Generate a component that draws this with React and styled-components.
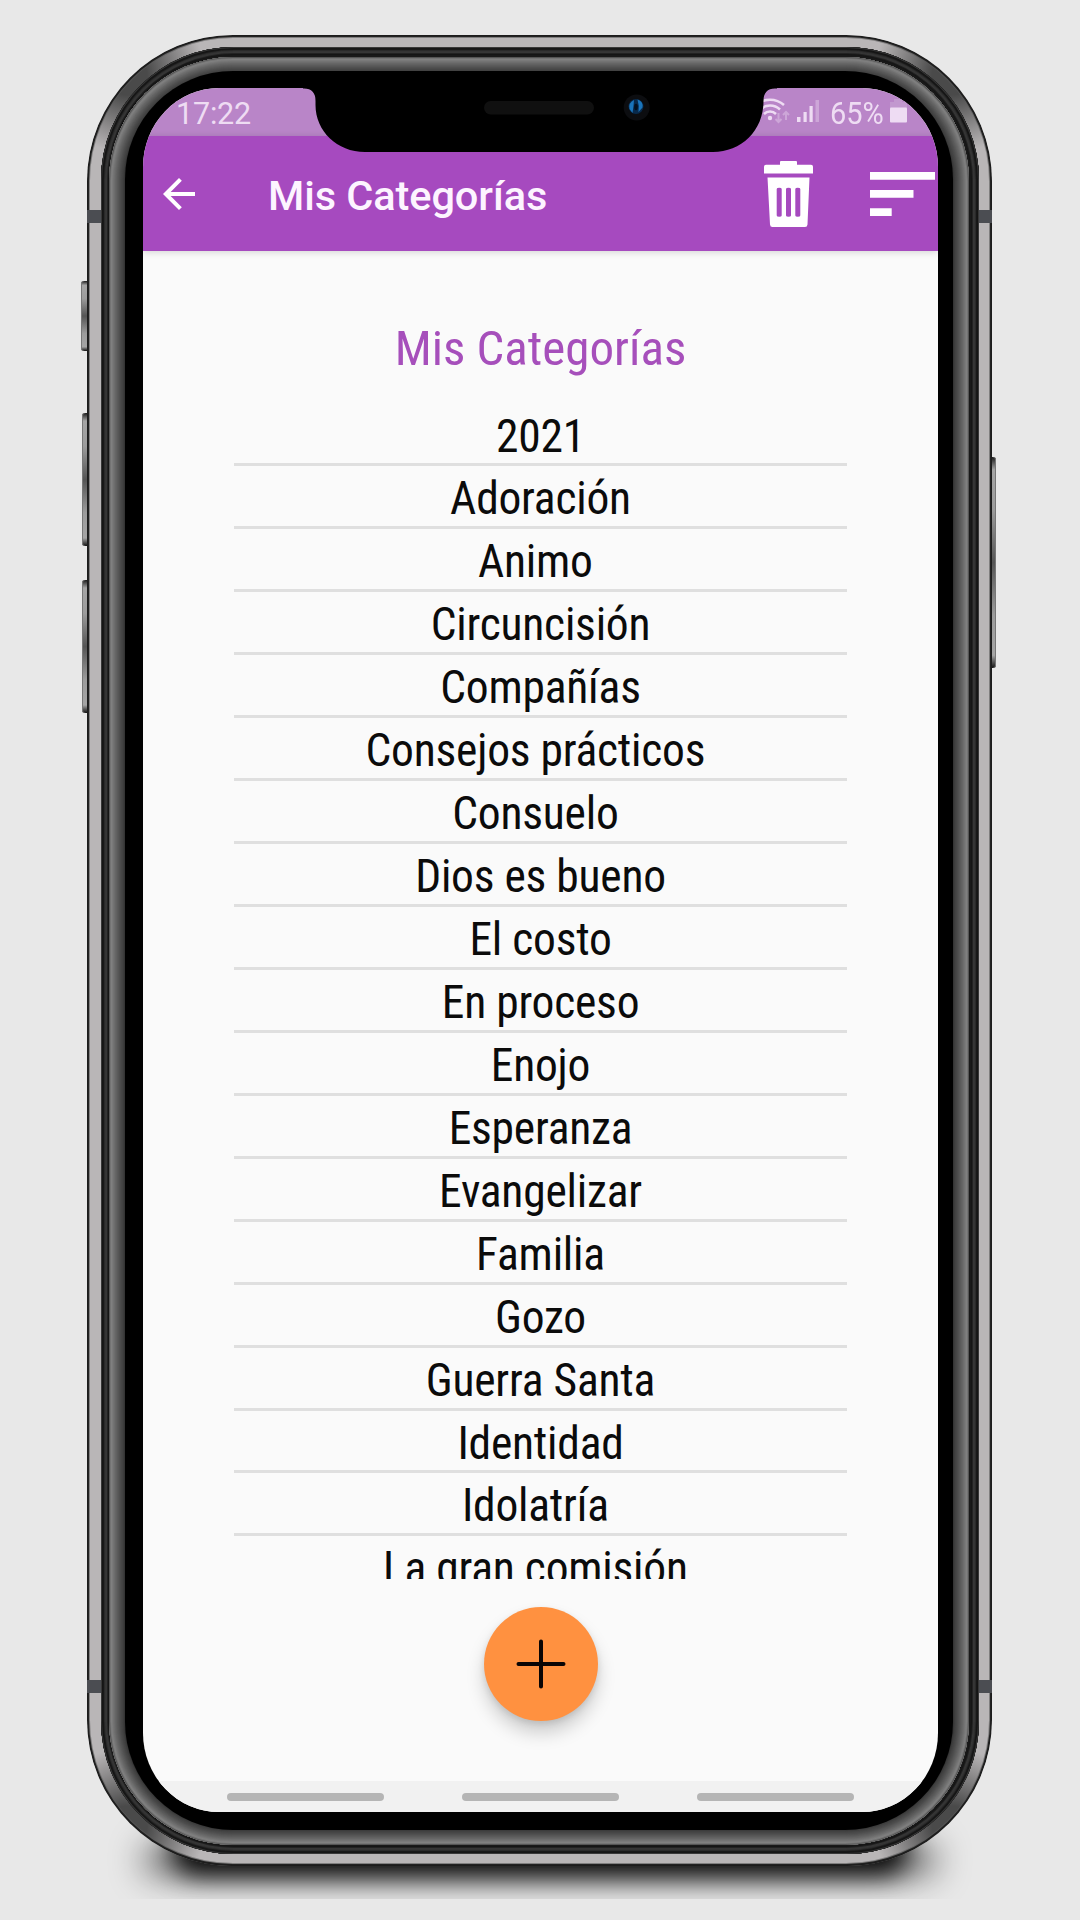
import React from "react";
import styled, { createGlobalStyle } from "styled-components";

const GlobalStyle = createGlobalStyle`
  * { box-sizing: border-box; }
  body { margin: 0; background: #e8e8e8; font-family: Roboto, sans-serif; }
`;

const ring = (colors) =>
  colors.map((c, i) => `inset 0 0 0 ${i + 1}px ${c}`).join(", ");

const Page = styled.main`
  position: relative;
  width: 1080px;
  height: 1920px;
  padding: 35px 0 0 87px;
  background: #e8e8e8;
  overflow: hidden;
`;

const FloorShadow = styled.div`
  position: absolute;
  left: 0;
  top: 1790px;
  width: 1080px;
  height: 109px;
  overflow: hidden;
  &::before {
    content: "";
    position: absolute;
    left: 172px;
    right: 172px;
    top: 36px;
    height: 50px;
    border-radius: 25px;
    filter: blur(13px);
    background: #080808;
  }
  &::after {
    content: "";
    position: absolute;
    left: 140px;
    right: 140px;
    top: 50px;
    height: 40px;
    border-radius: 20px;
    filter: blur(16px);
    background: rgba(0, 0, 0, 0.4);
  }
`;

const SideKey = styled.div`
  position: absolute;
  left: ${(p) => p.$x}px;
  top: ${(p) => p.$y}px;
  width: ${(p) => p.$w}px;
  height: ${(p) => p.$h}px;
  border-radius: ${(p) => (p.$right ? "0 3px 3px 0" : "3px 0 0 3px")};
  background: linear-gradient(#1a1a1a, #a5a5a5 6%, #9c9c9c 25%, #555 50%, #9c9c9c 75%, #a5a5a5 94%, #111);
  box-shadow: inset ${(p) => (p.$right ? "-1px" : "1px")} 0 0 #777;
`;

const Frame = styled.div`
  position: relative;
  width: 905px;
  height: 1831px;
  padding: 12px 13px 12px 13.5px;
  border-radius: 146px;
  background:
    radial-gradient(circle at 40px 40px, #4a4a4a 20px, transparent 78px),
    radial-gradient(circle at 865px 40px, #4a4a4a 20px, transparent 78px),
    radial-gradient(circle at 40px 1791px, #4a4a4a 20px, transparent 78px),
    radial-gradient(circle at 865px 1791px, #4a4a4a 20px, transparent 78px),
    #b9b6b7;
  box-shadow: ${ring(["#1c1c1c", "#222", "rgba(90,90,90,.6)"])};
`;

const Antenna = styled.i`
  position: absolute;
  top: ${(p) => p.$y}px;
  ${(p) => (p.$right ? "right: 0;" : "left: 0;")}
  width: 14px;
  height: 12.5px;
  background: #4b4d52;
`;

const Gasket = styled.div`
  position: relative;
  height: 100%;
  padding: 10px 10px 9px 8.5px;
  border-radius: 133px;
  background: #191919;
  box-shadow: ${ring(["#383838", "#151515", "#181818", "#2a2a2a", "#343434", "#363636", "#222", "#151515"])};
`;

const Chamfer = styled.div`
  height: 100%;
  padding: 14px 16px 15px 16px;
  border-radius: 124px;
  background: #343434;
  box-shadow: ${ring(["#555", "#747474", "#808080", "#7a7a7a", "#737373", "#6d6d6d", "#666", "#616161", "#5b5b5b", "#565656", "#505050", "#4b4b4b", "#464646", "#424242", "#3c3c3c"])};
`;

const Bezel = styled.div`
  height: 100%;
  padding: 16.5px 14.5px 18px 18px;
  border-radius: 108px;
  background: #000;
`;

const Screen = styled.div`
  position: relative;
  display: flex;
  flex-direction: column;
  width: 795px;
  height: 100%;
  border-radius: 76px / 79px;
  overflow: hidden;
  background: #fafafa;
`;

const StatusBar = styled.div`
  display: flex;
  flex: none;
  align-items: center;
  justify-content: space-between;
  height: 48.5px;
  padding: 3px 31px 0 33px;
  background: #b985c8;
  color: #eedcf3;
  font-size: 30.5px;
`;

const Clock = styled.span`
  letter-spacing: -0.2px;
`;

const StatusIcons = styled.div`
  display: flex;
  align-items: center;
  svg { display: block; margin-top: -4px; }
`;

const Percent = styled.span`
  width: 55px;
  margin: 0 5.5px 0 10px;
  span {
    display: inline-block;
    transform: scaleX(0.95);
    transform-origin: left center;
  }
`;

const AppBar = styled.header`
  display: flex;
  flex: none;
  align-items: center;
  height: 114.5px;
  padding: 1px 0 0 12px;
  background: #a64abf;
  box-shadow: 0 1px 7px rgba(0, 0, 0, 0.16);
  color: #fff;
  svg { display: block; flex: none; }
`;

const BarTitle = styled.h1`
  flex: 1;
  margin: 4px 0 0 65px;
  font-size: 41.5px;
  font-weight: 500;
  line-height: 50px;
  letter-spacing: -0.08px;
  color: #fdf4ff;
`;

const TrashButton = styled.div`
  margin-right: 57.5px;
`;

const SortButton = styled.div`
  width: 68px;
`;

const Content = styled.section`
  display: flex;
  flex: 1;
  flex-direction: column;
  align-items: center;
  padding-top: 68px;
`;

const Heading = styled.h2`
  margin: 0;
  height: 58px;
  font-size: 49px;
  font-weight: 400;
  font-stretch: 75%;
  line-height: 59px;
  color: #a64fbb;
  white-space: nowrap;
`;

const List = styled.ul`
  width: 613px;
  height: 1175px;
  margin: 27px 0 0;
  padding: 0;
  list-style: none;
  overflow: hidden;
`;

const Row = styled.li`
  height: 62.94px;
  border-bottom: 3px solid #dfdfdf;
  font-size: 45.5px;
  font-stretch: 75%;
  letter-spacing: -0.22px;
  line-height: 65px;
  text-align: center;
  color: #0b0b0b;
  white-space: pre;
`;

const Fab = styled.button`
  display: grid;
  place-items: center;
  width: 114px;
  height: 114px;
  margin: 28px 0 0 1px;
  padding: 0;
  border: 0;
  border-radius: 50%;
  background: #ff9140;
  box-shadow: 0 12px 18px rgba(0, 0, 0, 0.18), 0 3px 6px rgba(0, 0, 0, 0.1);
`;

const NavBar = styled.nav`
  display: flex;
  flex: none;
  justify-content: center;
  gap: 77.5px;
  height: 31px;
  padding-top: 12px;
  background: #f1f1f1;
`;

const NavPill = styled.span`
  width: 157.5px;
  height: 7.5px;
  border-radius: 4px;
  background: #b5b5b5;
`;

const NotchShape = styled.svg`
  position: absolute;
  left: 160px;
  top: -1px;
`;

const categories = [
  "2021", "Adoración", "Animo\u00a0", "Circuncisión", "Compañías", "Consejos prácticos\u00a0",
  "Consuelo\u00a0", "Dios es bueno", "El costo", "En proceso", "Enojo", "Esperanza",
  "Evangelizar", "Familia", "Gozo", "Guerra Santa", "Identidad", "Idolatría\u00a0",
  "La gran comisión\u00a0",
];

const Notch = () => (
  <NotchShape width="474" height="66" viewBox="0 0 474 66">
    <path d="M0 0H474V1.5H472Q460.500 1.500 460.500 14C460.500 44 438 65 410 65H62C34 65 12.500 44 12.500 18V14Q12.500 1.500 1 1.500H0Z" fill="#000" />
    <rect x="181" y="14" width="110" height="13.500" rx="6.700" fill="#101010" />
    <circle cx="333.700" cy="20.500" r="13" fill="#0c0d10" />
    <circle cx="333" cy="19.500" r="7.500" fill="#082a4c" />
    <path d="M331 13q-6 3-4.500 9l3 4 1-7zM334.500 12.500q6 2 5 8l-4 4.500q1-6-1-12.500z" fill="#1a74ba" />
    <ellipse cx="333" cy="20" rx="1.800" ry="3.200" fill="#04101e" />
  </NotchShape>
);

const Wifi = () => (
  <svg width="42" height="28" viewBox="0 0 42 28" fill="none" stroke="#eedcf3" strokeWidth="2.500">
    <path d="M1 8a21 21 0 0 1 28 0M5 12.500a14.500 14.500 0 0 1 20 0M9 17a8.500 8.500 0 0 1 12 0" />
    <circle cx="15" cy="21" r="2.200" fill="#eedcf3" stroke="none" />
    <path d="M23.500 16v9m-3-3 3 3 3-3M31 23v-8m-3 3 3-3 3 3" stroke="#cda6d8" strokeWidth="2" />
  </svg>
);

const Signal = () => (
  <svg width="23" height="26" viewBox="0 0 23 26" fill="#eedcf3">
    <rect x="0" y="19" width="3.500" height="5" />
    <rect x="6.500" y="14" width="3.200" height="10" />
    <rect x="12.500" y="8" width="3.200" height="16" />
    <rect x="18.500" y="2" width="3.500" height="22" fill="#cda6d8" />
  </svg>
);

const Battery = () => (
  <svg width="17" height="26" viewBox="0 0 17 26">
    <path d="M4 1h8v3h5v6H0V4h4z" fill="#c298cf" />
    <rect x="0" y="9.500" width="17" height="15" rx="1" fill="#eedcf3" />
  </svg>
);

const BackArrow = () => (
  <svg width="48" height="48" viewBox="0 0 24 24" fill="#fff">
    <path d="M20 11H7.830l5.590-5.590L12 4l-8 8 8 8 1.410-1.410L7.830 13H20z" />
  </svg>
);

const Trash = () => (
  <svg width="49" height="66" viewBox="0 0 49 66" fill="#fff">
    <path d="M17 0h15q1 0 1 1v2.700h14q2 0 2 2V12.500H0V5.700q0-2 2-2h14V1q0-1 1-1Z" />
    <path fillRule="evenodd" d="M3.500 16.500h42L43.500 63.500q-.2 2.500-2.500 2.500H8.500q-2.300 0-2.500-2.500ZM12.700 28v26.500q0 1.300 2.500 1.300t2.500-1.300V28q0-1.300-2.500-1.300T12.700 28ZM22 28v26.500q0 1.300 2.500 1.300T27 54.500V28q0-1.300-2.500-1.300T22 28ZM31.300 28v26.500q0 1.300 2.500 1.300t2.500-1.300V28q0-1.300-2.500-1.300T31.300 28Z" />
  </svg>
);

const Sort = () => (
  <svg width="65" height="44" viewBox="0 0 65 44" fill="#fff">
    <path d="M0 0h65v7.800H0zM0 18h43.500v7.700H0zM0 36.300h21.700V44H0z" />
  </svg>
);

export default function App() {
  return (
    <Page>
      <GlobalStyle />
      <FloorShadow />
      <SideKey $x={81} $y={281} $w={7} $h={70} />
      <SideKey $x={82} $y={413} $w={6} $h={133} />
      <SideKey $x={82} $y={580} $w={6} $h={133} />
      <SideKey $x={991} $y={457} $w={5} $h={211} $right />
      <Frame>
        <Antenna $y={175} />
        <Antenna $y={175} $right />
        <Antenna $y={1645} />
        <Antenna $y={1645} $right />
        <Gasket>
          <Chamfer>
            <Bezel>
              <Screen>
                <StatusBar>
                  <Clock>17:22</Clock>
                  <StatusIcons>
                    <Wifi />
                    <Signal />
                    <Percent><span>65%</span></Percent>
                    <Battery />
                  </StatusIcons>
                </StatusBar>
                <AppBar>
                  <BackArrow />
                  <BarTitle>Mis Categorías</BarTitle>
                  <TrashButton><Trash /></TrashButton>
                  <SortButton><Sort /></SortButton>
                </AppBar>
                <Content>
                  <Heading>Mis Categorías</Heading>
                  <List>
                    {categories.map((name) => (
                      <Row key={name}>{name}</Row>
                    ))}
                  </List>
                  <Fab aria-label="Agregar">
                    <svg width="50" height="50" viewBox="0 0 50 50" stroke="#0a0505" strokeWidth="4" strokeLinecap="round">
                      <path d="M2.500 25h45M25 2.500v45" />
                    </svg>
                  </Fab>
                </Content>
                <NavBar>
                  <NavPill />
                  <NavPill />
                  <NavPill />
                </NavBar>
                <Notch />
              </Screen>
            </Bezel>
          </Chamfer>
        </Gasket>
      </Frame>
    </Page>
  );
}
